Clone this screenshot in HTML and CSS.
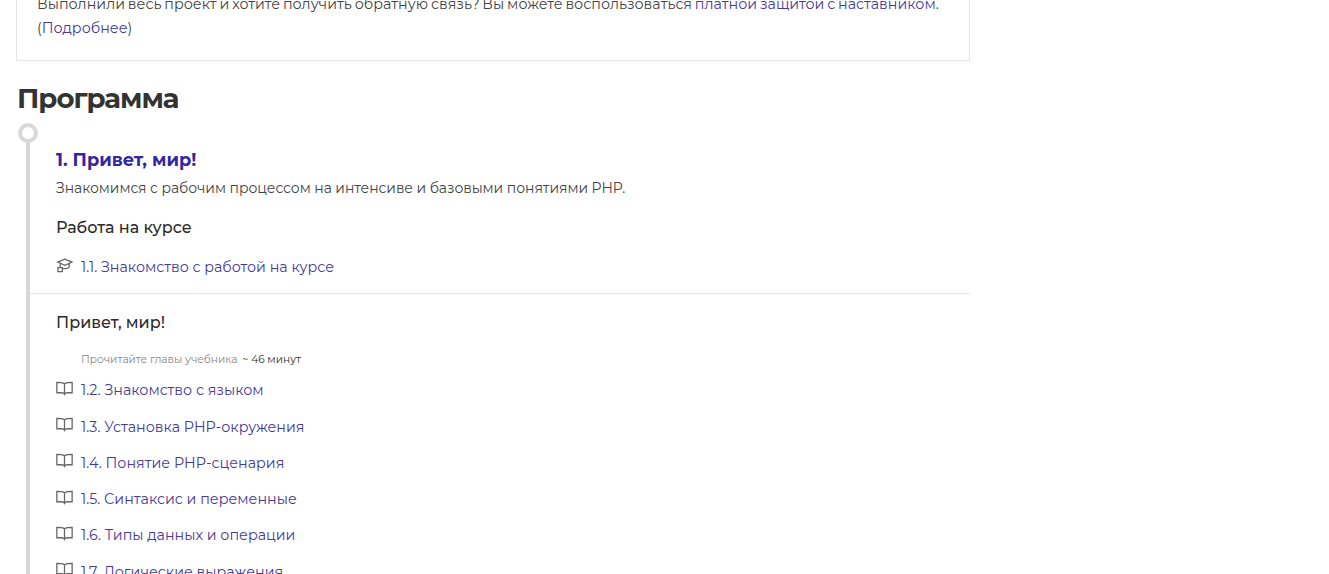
FILE: index.html
```
<!DOCTYPE html>
<html lang="ru">
<head>
<meta charset="utf-8">
<title>Программа</title>
<link rel="stylesheet" href="styles.css">
</head>
<body>
<svg width="0" height="0" class="defs">
  <symbol id="book" viewBox="0 0 16 14"><path d="M8 2.500C6.500 1.500 4 1.200 .8 1.200v9.800h4.500c1.200 0 2.200.4 2.700 1.500.5-1.100 1.500-1.500 2.700-1.500h4.500V1.200C12 1.200 9.500 1.500 8 2.500zM8 2.500v10" fill="none" stroke="currentColor" stroke-width="1.200"/></symbol>
  <symbol id="cap" viewBox="0 0 16 14"><path d="M8.500 1 1.500 3.800 8.500 6.800l6.500-3zM4 5.200V8.800M12.500 5v3.200C11.500 9.500 9 10.200 6.500 9.800M4 9H1.800v3.800H6V9z" fill="none" stroke="currentColor" stroke-width="1.200"/></symbol>
</svg>
<main class="page">
  <section class="notice">
    <p>Выполнили весь проект и хотите получить обратную связь? Вы можете воспользоваться <a href="#">платной защитой с наставником</a>.<br>(<a href="#">Подробнее</a>)</p>
  </section>
  <h2 class="title">Программа</h2>
  <div class="timeline">
    <span class="dot"></span>
    <div class="module">
      <h3 class="module-title">1. Привет, мир!</h3>
      <p class="module-desc">Знакомимся с рабочим процессом на интенсиве и базовыми понятиями PHP.</p>
      <h4 class="group-title">Работа на курсе</h4>
      <ul class="lessons">
        <li class="lesson"><svg class="icon"><use href="#cap"/></svg><a href="#">1.1. Знакомство с работой на курсе</a></li>
      </ul>
    </div>
    <div class="module second">
      <h4 class="group-title">Привет, мир!</h4>
      <p class="hint">Прочитайте главы учебника <span class="time">~ 46 минут</span></p>
      <ul class="lessons">
        <li class="lesson"><svg class="icon"><use href="#book"/></svg><a href="#">1.2. Знакомство с языком</a></li>
        <li class="lesson"><svg class="icon"><use href="#book"/></svg><a href="#">1.3. Установка PHP-окружения</a></li>
        <li class="lesson"><svg class="icon"><use href="#book"/></svg><a href="#">1.4. Понятие PHP-сценария</a></li>
        <li class="lesson"><svg class="icon"><use href="#book"/></svg><a href="#">1.5. Синтаксис и переменные</a></li>
        <li class="lesson"><svg class="icon"><use href="#book"/></svg><a href="#">1.6. Типы данных и операции</a></li>
        <li class="lesson"><svg class="icon"><use href="#book"/></svg><a href="#">1.7. Логические выражения</a></li>
      </ul>
    </div>
  </div>
</main>
</body>
</html>
```
FILE: styles.css
```
html, body { margin: 0; height: 574px; overflow: hidden; background: #fff; }
body { font-family: "Montserrat", "Lato", "Open Sans", sans-serif; color: #444; font-size: 14px; line-height: 24px; }
.defs { display: block; height: 0; }
.page { width: 954px; margin: -8px 0 0 16px; }
a { color: #453a97; text-decoration: none; }
p { margin: 0; }
.notice { border: 1px solid #e6e6e6; border-top: 0; padding: 0 20px 20px; height: 48px; font-size: 14.300px; word-spacing: -0.9px; white-space: nowrap; }
.title { margin: 18px 0 0 1px; font-size: 27.500px; letter-spacing: -1px; line-height: 38px; font-weight: 700; color: #333; }
.timeline { position: relative; margin-top: 6px; padding-left: 14px; }
.timeline::before { content: ""; position: absolute; left: 10px; top: 16px; width: 4px; height: 500px; background: #d8d8d8; }
.dot { position: absolute; left: 2px; top: 0; width: 20px; height: 20px; box-sizing: border-box; border: 4px solid #d8d8d8; border-radius: 50%; background: #fff; z-index: 1; }
.module { padding: 25px 0 2px 26px; }
.module-title { margin: 0; font-size: 17.700px; line-height: 24px; color: #34269e; font-weight: 700; }
.module-desc { margin-top: 4px; line-height: 24px; letter-spacing: -0.06px; }
.group-title { margin: 16px 0 0; font-size: 16px; line-height: 24px; font-weight: 500; color: #2b2b2b; }
.lessons { list-style: none; margin: 15px 0 0; padding: 0; }
.lesson { display: flex; align-items: center; gap: 8px; height: 24px; margin-bottom: 12.250px; font-size: 14.300px; }
.icon { width: 17px; height: 15px; color: #666; flex: none; position: relative; top: -2px; }
.second { border-top: 1px solid #e6e6e6; padding-top: 4px; }
.second .group-title { margin-top: 13px; }
.hint { margin: 17px 0 0 25px; font-size: 10.600px; line-height: 16px; color: #888; }
.time { color: #333; margin-left: 2px; }
.second .lessons { margin-top: 10px; }
```
